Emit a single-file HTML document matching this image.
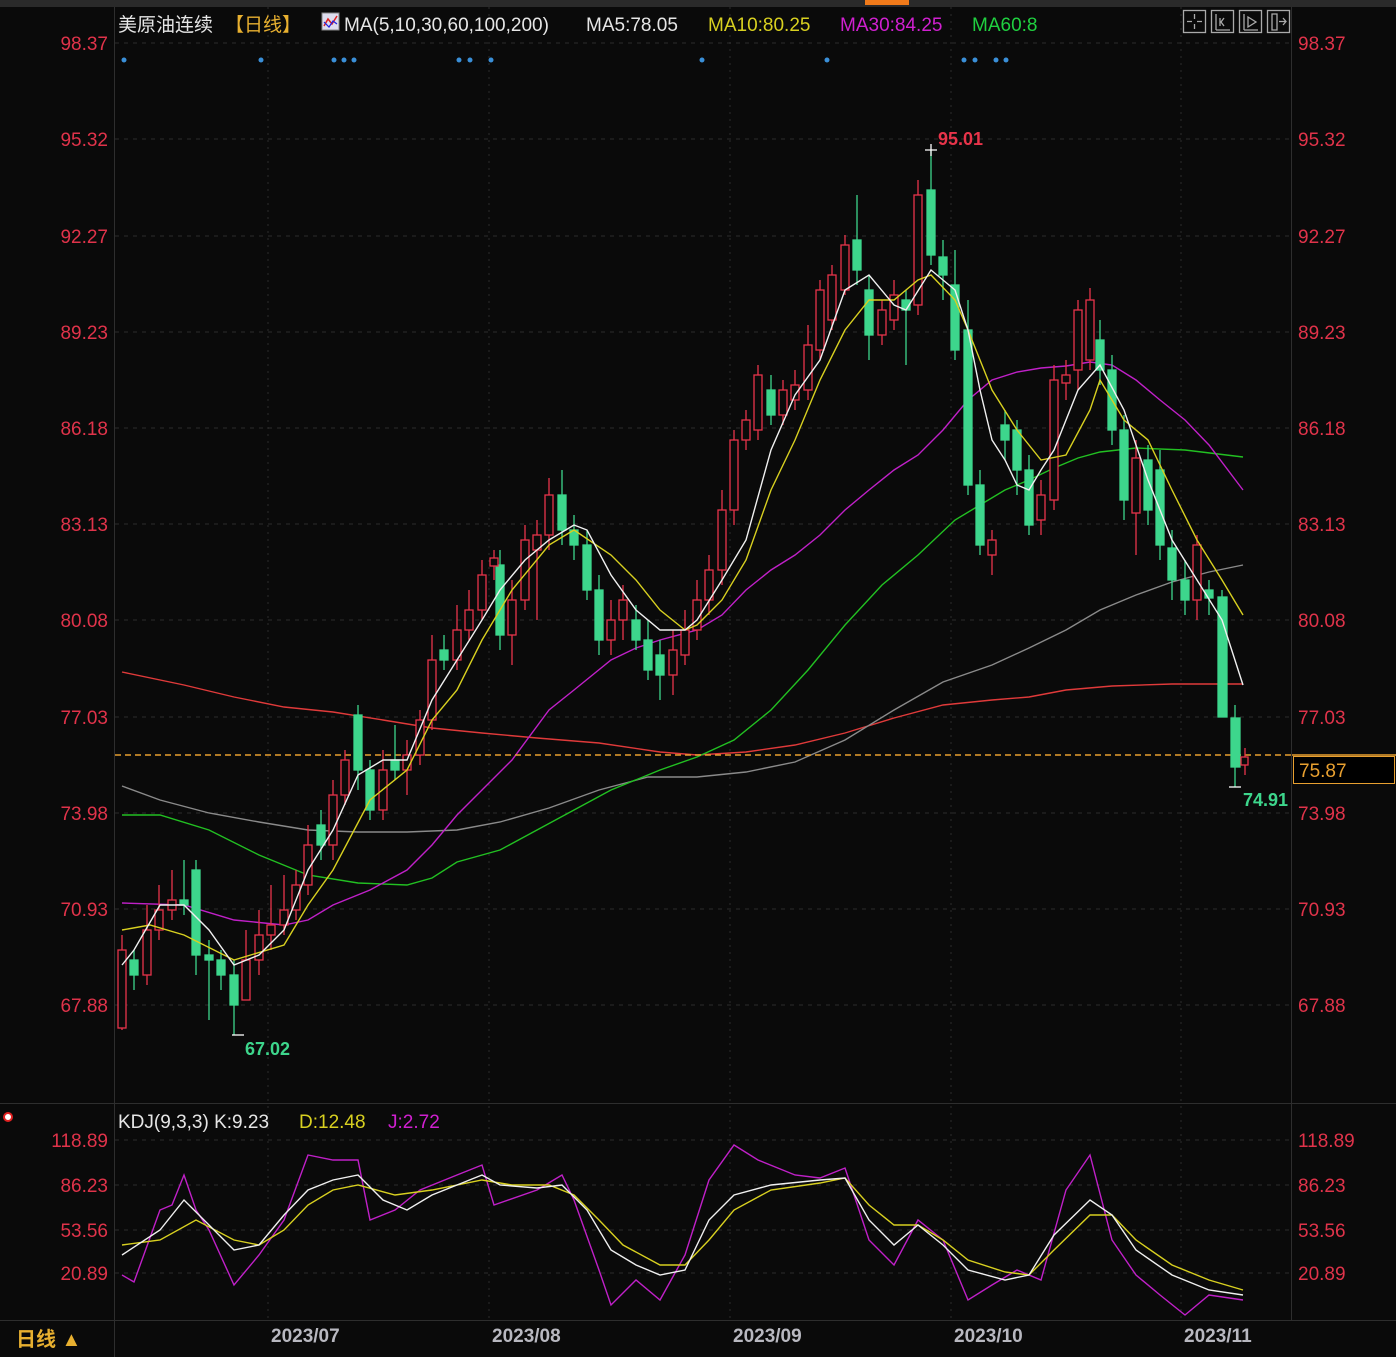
<!DOCTYPE html>
<html><head><meta charset="utf-8"><style>
html,body{margin:0;padding:0;background:#0a0a0a;width:1396px;height:1357px;overflow:hidden}
svg{display:block}
text{font-family:"Liberation Sans","Noto Sans CJK SC",sans-serif}
</style></head><body>
<svg width="1396" height="1357" viewBox="0 0 1396 1357" xmlns="http://www.w3.org/2000/svg">
<rect width="1396" height="1357" fill="#0a0a0a"/>
<rect width="1396" height="7" fill="#2a2a2a"/>
<rect x="865" y="0" width="44" height="5" fill="#f07a1a"/>
<!-- frame lines -->
<g stroke="#2e2e2e" stroke-width="1">
<line x1="114.5" y1="7" x2="114.5" y2="1357"/>
<line x1="1291.5" y1="7" x2="1291.5" y2="1320"/>
<line x1="0" y1="1103.5" x2="1396" y2="1103.5"/>
<line x1="0" y1="1320.5" x2="1396" y2="1320.5"/>
</g>
<!-- horizontal grid -->
<g stroke="#2c2c2c" stroke-dasharray="4,5">
<line x1="115" y1="43" x2="1290" y2="43"/><line x1="115" y1="139" x2="1290" y2="139"/>
<line x1="115" y1="236" x2="1290" y2="236"/><line x1="115" y1="332" x2="1290" y2="332"/>
<line x1="115" y1="428" x2="1290" y2="428"/><line x1="115" y1="524" x2="1290" y2="524"/>
<line x1="115" y1="620" x2="1290" y2="620"/><line x1="115" y1="717" x2="1290" y2="717"/>
<line x1="115" y1="813" x2="1290" y2="813"/><line x1="115" y1="909" x2="1290" y2="909"/>
<line x1="115" y1="1005" x2="1290" y2="1005"/>
<line x1="115" y1="1140" x2="1290" y2="1140"/><line x1="115" y1="1185" x2="1290" y2="1185"/>
<line x1="115" y1="1230" x2="1290" y2="1230"/><line x1="115" y1="1273" x2="1290" y2="1273"/>
</g>
<g stroke="#2c2c2c" stroke-dasharray="2,5">
<line x1="268" y1="7" x2="268" y2="1320"/><line x1="489" y1="7" x2="489" y2="1320"/>
<line x1="730" y1="7" x2="730" y2="1320"/><line x1="951" y1="7" x2="951" y2="1320"/>
<line x1="1181" y1="7" x2="1181" y2="1320"/>
</g>
<!-- axis labels -->
<g fill="#e0334a" font-size="19">
<g text-anchor="end">
<text x="108" y="50">98.37</text><text x="108" y="146">95.32</text><text x="108" y="243">92.27</text>
<text x="108" y="339">89.23</text><text x="108" y="435">86.18</text><text x="108" y="531">83.13</text>
<text x="108" y="627">80.08</text><text x="108" y="724">77.03</text><text x="108" y="820">73.98</text>
<text x="108" y="916">70.93</text><text x="108" y="1012">67.88</text>
<text x="108" y="1147">118.89</text><text x="108" y="1192">86.23</text><text x="108" y="1237">53.56</text><text x="108" y="1280">20.89</text>
</g>
<text x="1298" y="50">98.37</text><text x="1298" y="146">95.32</text><text x="1298" y="243">92.27</text>
<text x="1298" y="339">89.23</text><text x="1298" y="435">86.18</text><text x="1298" y="531">83.13</text>
<text x="1298" y="627">80.08</text><text x="1298" y="724">77.03</text><text x="1298" y="820">73.98</text>
<text x="1298" y="916">70.93</text><text x="1298" y="1012">67.88</text>
<text x="1298" y="1147">118.89</text><text x="1298" y="1192">86.23</text><text x="1298" y="1237">53.56</text><text x="1298" y="1280">20.89</text>
</g>
<!-- header -->
<text x="118" y="31" font-size="19" fill="#e6e6e6">美原油连续</text>
<text x="225" y="31" font-size="19" fill="#e8b030">【日线】</text>
<rect x="322" y="13" width="17" height="17" fill="#dde" stroke="#888"/>
<path d="M324 26 L328 19 L332 24 L337 16" stroke="#d22" fill="none" stroke-width="1.5"/>
<path d="M324 22 L329 27 L333 21 L337 24" stroke="#22d" fill="none" stroke-width="1.2"/>
<text x="344" y="31" font-size="19" fill="#e6e6e6">MA(5,10,30,60,100,200)</text>
<text x="586" y="31" font-size="19" fill="#e6e6e6">MA5:78.05</text>
<text x="708" y="31" font-size="19" fill="#d8d020">MA10:80.25</text>
<text x="840" y="31" font-size="19" fill="#d020d0">MA30:84.25</text>
<text x="972" y="31" font-size="19" fill="#20d040">MA60:8</text>
<g stroke="#aaa" fill="none" stroke-width="1.3">
<rect x="1183.5" y="10.5" width="22" height="22"/><rect x="1211.5" y="10.5" width="22" height="22"/>
<rect x="1239.5" y="10.5" width="22" height="22"/><rect x="1267.5" y="10.5" width="22" height="22"/>
<path d="M1194.5 14v5M1194.5 24v5M1187 21.5h5M1197 21.5h5"/>
<path d="M1216 14v16M1230 30h-14M1220 18v8M1224 18l-3 4 3 4"/>
<path d="M1244 14v16M1258 30h-14M1248 17l8 5-8 5z"/>
<path d="M1272 14v16h5v-16zM1279 21.5h7M1283 18l3 3.5-3 3.5"/>
</g>
<!-- blue dots -->
<g fill="#3a8fd8">
<circle cx="124" cy="60" r="2.5"/><circle cx="261" cy="60" r="2.5"/><circle cx="334" cy="60" r="2.5"/><circle cx="344" cy="60" r="2.5"/><circle cx="354" cy="60" r="2.5"/>
<circle cx="459" cy="60" r="2.5"/><circle cx="470" cy="60" r="2.5"/><circle cx="491" cy="60" r="2.5"/><circle cx="702" cy="60" r="2.5"/><circle cx="827" cy="60" r="2.5"/>
<circle cx="964" cy="60" r="2.5"/><circle cx="975" cy="60" r="2.5"/><circle cx="996" cy="60" r="2.5"/><circle cx="1006" cy="60" r="2.5"/>
</g>
<!-- moving averages -->
<g fill="none" stroke-width="1.4">
<polyline stroke="#e03a3a" points="122,672 184,685 234,697 284,707 333,712 383,720 432,728 482,733 537,738 599,743 660,752 697,755 746,752 795,745 845,733 894,718 943,705 992,700 1029,697 1066,690 1112,686 1172,684 1243,684"/>
<polyline stroke="#8a8a8a" points="122,786 160,800 209,813 259,822 308,830 358,832 407,832 457,830 500,822 549,808 599,790 648,777 697,777 746,772 795,762 845,740 894,710 943,682 992,665 1029,648 1066,630 1100,610 1136,595 1172,582 1209,572 1243,565"/>
<polyline stroke="#22c022" points="122,815 160,815 209,830 259,855 308,875 358,883 407,885 432,878 457,862 500,850 537,830 574,810 611,790 660,770 697,757 734,740 771,710 808,670 845,625 882,585 918,555 955,520 980,505 1005,490 1029,480 1054,468 1078,458 1100,452 1136,448 1185,450 1243,457"/>
<polyline stroke="#c020c8" points="122,903 184,905 234,920 284,925 308,920 333,905 370,890 407,870 432,845 457,815 482,790 512,760 549,710 574,690 611,660 636,648 660,640 697,630 722,615 746,590 771,570 795,555 820,535 845,510 869,490 894,470 918,455 943,430 968,400 992,380 1017,372 1041,368 1066,366 1090,362 1112,365 1136,380 1160,400 1185,420 1209,445 1243,490"/>
</g>
<!-- dashed price line -->
<line x1="115" y1="755" x2="1292" y2="755" stroke="#e8a030" stroke-dasharray="6,4" stroke-width="1.4"/>
<line x1="1292" y1="755" x2="1396" y2="755" stroke="#e8a030" stroke-width="1.4"/>
<rect x="1293.5" y="756.5" width="101" height="27" fill="#000" stroke="#e8a030"/>
<text x="1299" y="777" font-size="19" fill="#e8a030">75.87</text>
<!-- candles -->
<g stroke-width="1.3">
<g stroke="#3dd68c" fill="#3dd68c">
<line x1="134" y1="950" x2="134" y2="990"/><rect x="130" y="960" width="8" height="15"/>
<line x1="184" y1="860" x2="184" y2="915"/><rect x="180" y="900" width="8" height="5"/>
<line x1="196" y1="860" x2="196" y2="975"/><rect x="192" y="870" width="8" height="85"/>
<line x1="209" y1="940" x2="209" y2="1020"/><rect x="205" y="955" width="8" height="5"/>
<line x1="221" y1="950" x2="221" y2="990"/><rect x="217" y="960" width="8" height="15"/>
<line x1="234" y1="960" x2="234" y2="1035"/><rect x="230" y="975" width="8" height="30"/>
<line x1="321" y1="810" x2="321" y2="860"/><rect x="317" y="825" width="8" height="20"/>
<line x1="358" y1="705" x2="358" y2="790"/><rect x="354" y="715" width="8" height="55"/>
<line x1="370" y1="760" x2="370" y2="820"/><rect x="366" y="770" width="8" height="40"/>
<line x1="395" y1="725" x2="395" y2="780"/><rect x="391" y="760" width="8" height="10"/>
<line x1="444" y1="635" x2="444" y2="670"/><rect x="440" y="650" width="8" height="10"/>
<line x1="500" y1="550" x2="500" y2="650"/><rect x="496" y="565" width="8" height="70"/>
<line x1="562" y1="470" x2="562" y2="545"/><rect x="558" y="495" width="8" height="35"/>
<line x1="574" y1="515" x2="574" y2="560"/><rect x="570" y="530" width="8" height="15"/>
<line x1="587" y1="530" x2="587" y2="600"/><rect x="583" y="545" width="8" height="45"/>
<line x1="599" y1="575" x2="599" y2="655"/><rect x="595" y="590" width="8" height="50"/>
<line x1="636" y1="605" x2="636" y2="650"/><rect x="632" y="620" width="8" height="20"/>
<line x1="648" y1="620" x2="648" y2="680"/><rect x="644" y="640" width="8" height="30"/>
<line x1="660" y1="640" x2="660" y2="700"/><rect x="656" y="655" width="8" height="20"/>
<line x1="771" y1="375" x2="771" y2="425"/><rect x="767" y="390" width="8" height="25"/>
<line x1="857" y1="195" x2="857" y2="285"/><rect x="853" y="240" width="8" height="30"/>
<line x1="869" y1="275" x2="869" y2="360"/><rect x="865" y="290" width="8" height="45"/>
<line x1="906" y1="290" x2="906" y2="365"/><rect x="902" y="300" width="8" height="10"/>
<line x1="931" y1="150" x2="931" y2="265"/><rect x="927" y="190" width="8" height="65"/>
<line x1="943" y1="240" x2="943" y2="300"/><rect x="939" y="257" width="8" height="18"/>
<line x1="955" y1="250" x2="955" y2="360"/><rect x="951" y="285" width="8" height="65"/>
<line x1="968" y1="300" x2="968" y2="495"/><rect x="964" y="330" width="8" height="155"/>
<line x1="980" y1="470" x2="980" y2="555"/><rect x="976" y="485" width="8" height="60"/>
<line x1="1005" y1="410" x2="1005" y2="460"/><rect x="1001" y="425" width="8" height="15"/>
<line x1="1017" y1="420" x2="1017" y2="495"/><rect x="1013" y="430" width="8" height="40"/>
<line x1="1029" y1="455" x2="1029" y2="535"/><rect x="1025" y="470" width="8" height="55"/>
<line x1="1100" y1="320" x2="1100" y2="385"/><rect x="1096" y="340" width="8" height="30"/>
<line x1="1112" y1="355" x2="1112" y2="445"/><rect x="1108" y="370" width="8" height="60"/>
<line x1="1124" y1="415" x2="1124" y2="520"/><rect x="1120" y="430" width="8" height="70"/>
<line x1="1148" y1="445" x2="1148" y2="525"/><rect x="1144" y="460" width="8" height="50"/>
<line x1="1160" y1="450" x2="1160" y2="560"/><rect x="1156" y="470" width="8" height="75"/>
<line x1="1172" y1="530" x2="1172" y2="600"/><rect x="1168" y="548" width="8" height="32"/>
<line x1="1185" y1="560" x2="1185" y2="615"/><rect x="1181" y="580" width="8" height="20"/>
<line x1="1209" y1="580" x2="1209" y2="615"/><rect x="1205" y="590" width="8" height="8"/>
<line x1="1222" y1="590" x2="1222" y2="717"/><rect x="1218" y="597" width="9" height="120"/>
<line x1="1235" y1="705" x2="1235" y2="787"/><rect x="1231" y="718" width="9" height="49"/>
</g>
<g stroke="#e8344a" fill="#0a0a0a">
<line x1="122" y1="935" x2="122" y2="1030"/><rect x="118" y="950" width="8" height="78"/>
<line x1="147" y1="905" x2="147" y2="985"/><rect x="143" y="930" width="8" height="45"/>
<line x1="159" y1="885" x2="159" y2="940"/><rect x="155" y="910" width="8" height="20"/>
<line x1="172" y1="870" x2="172" y2="920"/><rect x="168" y="900" width="8" height="10"/>
<line x1="246" y1="930" x2="246" y2="1000"/><rect x="242" y="960" width="8" height="40"/>
<line x1="259" y1="910" x2="259" y2="975"/><rect x="255" y="935" width="8" height="25"/>
<line x1="271" y1="885" x2="271" y2="950"/><rect x="267" y="925" width="8" height="10"/>
<line x1="284" y1="875" x2="284" y2="935"/><rect x="280" y="910" width="8" height="15"/>
<line x1="296" y1="870" x2="296" y2="920"/><rect x="292" y="885" width="8" height="25"/>
<line x1="308" y1="825" x2="308" y2="895"/><rect x="304" y="845" width="8" height="40"/>
<line x1="333" y1="780" x2="333" y2="860"/><rect x="329" y="795" width="8" height="50"/>
<line x1="345" y1="750" x2="345" y2="805"/><rect x="341" y="760" width="8" height="35"/>
<line x1="383" y1="750" x2="383" y2="820"/><rect x="379" y="770" width="8" height="40"/>
<line x1="407" y1="740" x2="407" y2="795"/><rect x="403" y="755" width="8" height="15"/>
<line x1="420" y1="710" x2="420" y2="765"/><rect x="416" y="720" width="8" height="35"/>
<line x1="432" y1="635" x2="432" y2="730"/><rect x="428" y="660" width="8" height="60"/>
<line x1="457" y1="605" x2="457" y2="670"/><rect x="453" y="630" width="8" height="30"/>
<line x1="469" y1="590" x2="469" y2="640"/><rect x="465" y="610" width="8" height="20"/>
<line x1="482" y1="560" x2="482" y2="620"/><rect x="478" y="575" width="8" height="35"/>
<line x1="494" y1="550" x2="494" y2="580"/><rect x="490" y="558" width="8" height="8"/>
<line x1="512" y1="580" x2="512" y2="665"/><rect x="508" y="600" width="8" height="35"/>
<line x1="525" y1="525" x2="525" y2="610"/><rect x="521" y="540" width="8" height="60"/>
<line x1="537" y1="520" x2="537" y2="620"/><rect x="533" y="535" width="8" height="15"/>
<line x1="549" y1="478" x2="549" y2="550"/><rect x="545" y="495" width="8" height="40"/>
<line x1="611" y1="600" x2="611" y2="655"/><rect x="607" y="620" width="8" height="20"/>
<line x1="623" y1="585" x2="623" y2="640"/><rect x="619" y="600" width="8" height="20"/>
<line x1="673" y1="630" x2="673" y2="695"/><rect x="669" y="650" width="8" height="25"/>
<line x1="685" y1="610" x2="685" y2="665"/><rect x="681" y="630" width="8" height="25"/>
<line x1="697" y1="580" x2="697" y2="640"/><rect x="693" y="600" width="8" height="30"/>
<line x1="709" y1="555" x2="709" y2="615"/><rect x="705" y="570" width="8" height="30"/>
<line x1="722" y1="490" x2="722" y2="585"/><rect x="718" y="510" width="8" height="60"/>
<line x1="734" y1="430" x2="734" y2="525"/><rect x="730" y="440" width="8" height="70"/>
<line x1="746" y1="410" x2="746" y2="450"/><rect x="742" y="420" width="8" height="20"/>
<line x1="758" y1="365" x2="758" y2="440"/><rect x="754" y="375" width="8" height="55"/>
<line x1="783" y1="380" x2="783" y2="425"/><rect x="779" y="390" width="8" height="25"/>
<line x1="795" y1="370" x2="795" y2="410"/><rect x="791" y="385" width="8" height="15"/>
<line x1="808" y1="325" x2="808" y2="400"/><rect x="804" y="345" width="8" height="45"/>
<line x1="820" y1="280" x2="820" y2="360"/><rect x="816" y="290" width="8" height="60"/>
<line x1="832" y1="265" x2="832" y2="330"/><rect x="828" y="275" width="8" height="45"/>
<line x1="845" y1="235" x2="845" y2="295"/><rect x="841" y="245" width="8" height="45"/>
<line x1="882" y1="300" x2="882" y2="345"/><rect x="878" y="310" width="8" height="25"/>
<line x1="894" y1="280" x2="894" y2="330"/><rect x="890" y="295" width="8" height="25"/>
<line x1="918" y1="180" x2="918" y2="315"/><rect x="914" y="195" width="8" height="110"/>
<line x1="992" y1="530" x2="992" y2="575"/><rect x="988" y="540" width="8" height="15"/>
<line x1="1041" y1="480" x2="1041" y2="535"/><rect x="1037" y="495" width="8" height="25"/>
<line x1="1054" y1="365" x2="1054" y2="510"/><rect x="1050" y="380" width="8" height="120"/>
<line x1="1066" y1="360" x2="1066" y2="400"/><rect x="1062" y="375" width="8" height="8"/>
<line x1="1078" y1="300" x2="1078" y2="390"/><rect x="1074" y="310" width="8" height="60"/>
<line x1="1090" y1="288" x2="1090" y2="370"/><rect x="1086" y="300" width="8" height="60"/>
<line x1="1136" y1="440" x2="1136" y2="555"/><rect x="1132" y="458" width="8" height="55"/>
<line x1="1197" y1="535" x2="1197" y2="620"/><rect x="1193" y="545" width="8" height="55"/>
<line x1="1245" y1="748" x2="1245" y2="775"/><rect x="1241" y="757" width="7" height="8"/>
</g>
</g>
<!-- MA5/MA10 over candles -->
<g fill="none" stroke-width="1.4">
<polyline stroke="#d8d020" points="122,930 150,925 184,935 234,960 284,945 308,905 333,870 370,800 407,770 432,720 457,690 482,640 512,590 549,545 574,530 611,555 636,580 660,610 685,630 697,625 722,600 746,560 771,490 795,440 820,380 845,330 869,300 894,300 918,280 931,275 955,300 968,330 992,390 1017,430 1041,460 1066,455 1090,410 1100,380 1124,420 1148,440 1172,490 1197,540 1222,580 1243,615"/>
<polyline stroke="#f0f0f0" points="122,965 134,950 160,905 184,905 209,930 234,965 259,955 284,930 308,870 333,830 358,775 383,760 407,760 432,700 457,660 482,620 500,590 525,560 549,540 574,525 587,530 611,575 636,610 660,630 685,630 697,620 722,580 746,540 771,450 795,395 820,360 845,290 869,275 894,305 906,310 931,270 955,290 968,330 980,390 992,440 1005,460 1017,485 1029,490 1041,470 1054,450 1066,420 1078,390 1100,365 1124,410 1148,480 1172,540 1197,580 1222,620 1243,685"/>
</g>
<!-- extreme markers -->
<path d="M925 150h12M931 144v12" stroke="#fff" stroke-width="1.3"/>
<text x="938" y="145" font-size="18" font-weight="bold" fill="#e8344a">95.01</text>
<path d="M232 1035h12" stroke="#fff" stroke-width="1.3"/>
<text x="245" y="1055" font-size="18" font-weight="bold" fill="#3dd68c">67.02</text>
<path d="M1229 787h12" stroke="#fff" stroke-width="1.3"/>
<text x="1243" y="806" font-size="18" font-weight="bold" fill="#3dd68c">74.91</text>
<!-- KDJ -->
<circle cx="8" cy="1117" r="4" fill="#fff" stroke="#e02020" stroke-width="2"/>
<text x="118" y="1128" font-size="19" fill="#e6e6e6">KDJ(9,3,3) K:9.23</text>
<text x="299" y="1128" font-size="19" fill="#d8d020">D:12.48</text>
<text x="388" y="1128" font-size="19" fill="#d020d0">J:2.72</text>
<g fill="none" stroke-width="1.4">
<polyline stroke="#c020c8" points="122,1275 134,1282 160,1210 172,1205 184,1175 196,1210 209,1230 234,1285 259,1255 284,1220 308,1155 333,1160 358,1160 370,1220 395,1210 420,1190 457,1175 482,1165 494,1205 537,1190 562,1175 574,1200 599,1270 611,1305 636,1280 660,1300 685,1255 709,1180 734,1145 758,1160 795,1175 820,1178 845,1168 869,1240 894,1265 918,1220 943,1240 968,1300 992,1285 1017,1270 1041,1280 1066,1190 1090,1155 1112,1240 1136,1275 1160,1295 1185,1315 1209,1295 1243,1300"/>
<polyline stroke="#d8d020" points="122,1245 160,1240 196,1220 234,1240 259,1245 284,1230 308,1205 333,1190 358,1185 395,1195 432,1190 482,1180 512,1185 549,1185 574,1195 599,1220 623,1245 660,1265 685,1265 709,1240 734,1210 771,1190 820,1183 845,1178 869,1205 894,1225 918,1225 943,1240 968,1260 1005,1272 1029,1275 1054,1250 1090,1215 1112,1215 1136,1240 1172,1265 1209,1280 1243,1290"/>
<polyline stroke="#f0f0f0" points="122,1255 160,1230 184,1200 209,1225 234,1250 259,1245 284,1215 308,1190 333,1180 358,1175 383,1200 407,1210 432,1195 482,1175 500,1185 537,1188 562,1185 587,1210 611,1250 636,1265 660,1275 685,1270 709,1220 734,1195 771,1185 820,1180 845,1178 869,1220 894,1245 918,1225 943,1245 968,1270 1005,1280 1029,1275 1054,1235 1090,1200 1112,1215 1136,1250 1172,1275 1209,1290 1243,1295"/>
</g>
<!-- bottom axis -->
<g font-size="19" font-weight="bold" fill="#b8b8c0">
<text x="271" y="1342">2023/07</text><text x="492" y="1342">2023/08</text><text x="733" y="1342">2023/09</text>
<text x="954" y="1342">2023/10</text><text x="1184" y="1342">2023/11</text>
</g>
<text x="16" y="1346" font-size="20" font-weight="bold" fill="#e8b030">日线 ▲</text>
</svg>
</body></html>
